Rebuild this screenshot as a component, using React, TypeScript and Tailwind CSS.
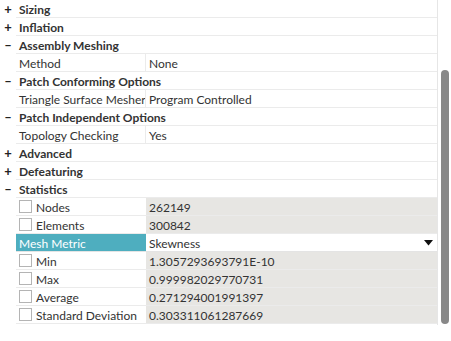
import React from "react";

type Row =
  | { kind: "group"; label: string; open: boolean }
  | { kind: "prop"; label: string; value: string }
  | { kind: "check"; label: string; value: string }
  | { kind: "select"; label: string; value: string };

const rows: Row[] = [
  { kind: "group", label: "Sizing", open: false },
  { kind: "group", label: "Inflation", open: false },
  { kind: "group", label: "Assembly Meshing", open: true },
  { kind: "prop", label: "Method", value: "None" },
  { kind: "group", label: "Patch Conforming Options", open: true },
  { kind: "prop", label: "Triangle Surface Mesher", value: "Program Controlled" },
  { kind: "group", label: "Patch Independent Options", open: true },
  { kind: "prop", label: "Topology Checking", value: "Yes" },
  { kind: "group", label: "Advanced", open: false },
  { kind: "group", label: "Defeaturing", open: false },
  { kind: "group", label: "Statistics", open: true },
  { kind: "check", label: "Nodes", value: "262149" },
  { kind: "check", label: "Elements", value: "300842" },
  { kind: "select", label: "Mesh Metric", value: "Skewness" },
  { kind: "check", label: "Min", value: "1.3057293693791E-10" },
  { kind: "check", label: "Max", value: "0.999982029770731" },
  { kind: "check", label: "Average", value: "0.271294001991397" },
  { kind: "check", label: "Standard Deviation", value: "0.303311061287669" },
];

function Checkbox() {
  return <span className="w-[13px] h-[13px] border border-[#b4b4b4] bg-white shrink-0 -mt-[2px]" />;
}

function RowView({ row }: { row: Row }) {
  if (row.kind === "group") {
    return (
      <div className="flex h-[18px]">
        <div className="w-[16px] flex items-center justify-center text-[13px] font-bold text-[#222] leading-none">
          {row.open ? "–" : "+"}
        </div>
        <div className="flex-1 flex items-center pt-[2px] border-b border-[#ebebeb] pl-[3px] font-bold text-[#333] whitespace-nowrap">
          {row.label}
        </div>
      </div>
    );
  }
  if (row.kind === "prop") {
    return (
      <div className="flex h-[18px]">
        <div className="w-[16px]" />
        <div className="flex-1 flex border-b border-[#ebebeb]">
          <div className="w-[130px] flex items-center pt-[2px] pl-[3px] border-r border-[#ebebeb] text-[#333] whitespace-nowrap overflow-hidden">
            {row.label}
          </div>
          <div className="flex-1 flex items-center pt-[2px] pl-[3px] text-[#333] whitespace-nowrap">{row.value}</div>
        </div>
      </div>
    );
  }
  if (row.kind === "select") {
    return (
      <div className="flex h-[18px]">
        <div className="w-[16px]" />
        <div className="flex-1 flex border-b border-[#e4e4e4]">
          <div className="w-[130px] flex items-center pt-[2px] pl-[3px] bg-[#4eaebf] text-white whitespace-nowrap">
            {row.label}
          </div>
          <div className="flex-1 flex items-center justify-between pt-[2px] pl-[3px] pr-[4px] bg-white text-[#333]">
            <span>{row.value}</span>
            <svg width="9" height="6" viewBox="0 0 9 6" className="-mt-[2px]">
              <path d="M0 0 H9 L4.5 5.5 Z" fill="#111" />
            </svg>
          </div>
        </div>
      </div>
    );
  }
  return (
    <div className="flex h-[18px]">
      <div className="w-[16px]" />
      <div className="flex-1 flex border-b border-[#ebebeb]">
        <div className="w-[130px] flex items-center pt-[2px] gap-[4px] pl-[3px] bg-white text-[#333] whitespace-nowrap overflow-hidden">
          <Checkbox />
          {row.label}
        </div>
        <div className="flex-1 flex items-center pt-[2px] pl-[3px] bg-[#e7e6e3] text-[#333] whitespace-nowrap">{row.value}</div>
      </div>
    </div>
  );
}

export default function App() {
  return (
    <div
      className="w-[451px] h-[341px] bg-white flex overflow-hidden text-[12px]"
      style={{ fontFamily: 'Lato, "Liberation Sans", sans-serif' }}
    >
      <div className="w-[438px] h-[325px] flex flex-col border-r border-[#e6e6e6]">
        {rows.map((r, i) => (
          <RowView key={i} row={r} />
        ))}
      </div>
      <div className="flex-1 flex justify-center pt-[70px]">
        <div className="w-[8px] h-[254px] rounded-full bg-[#888888]" />
      </div>
    </div>
  );
}
